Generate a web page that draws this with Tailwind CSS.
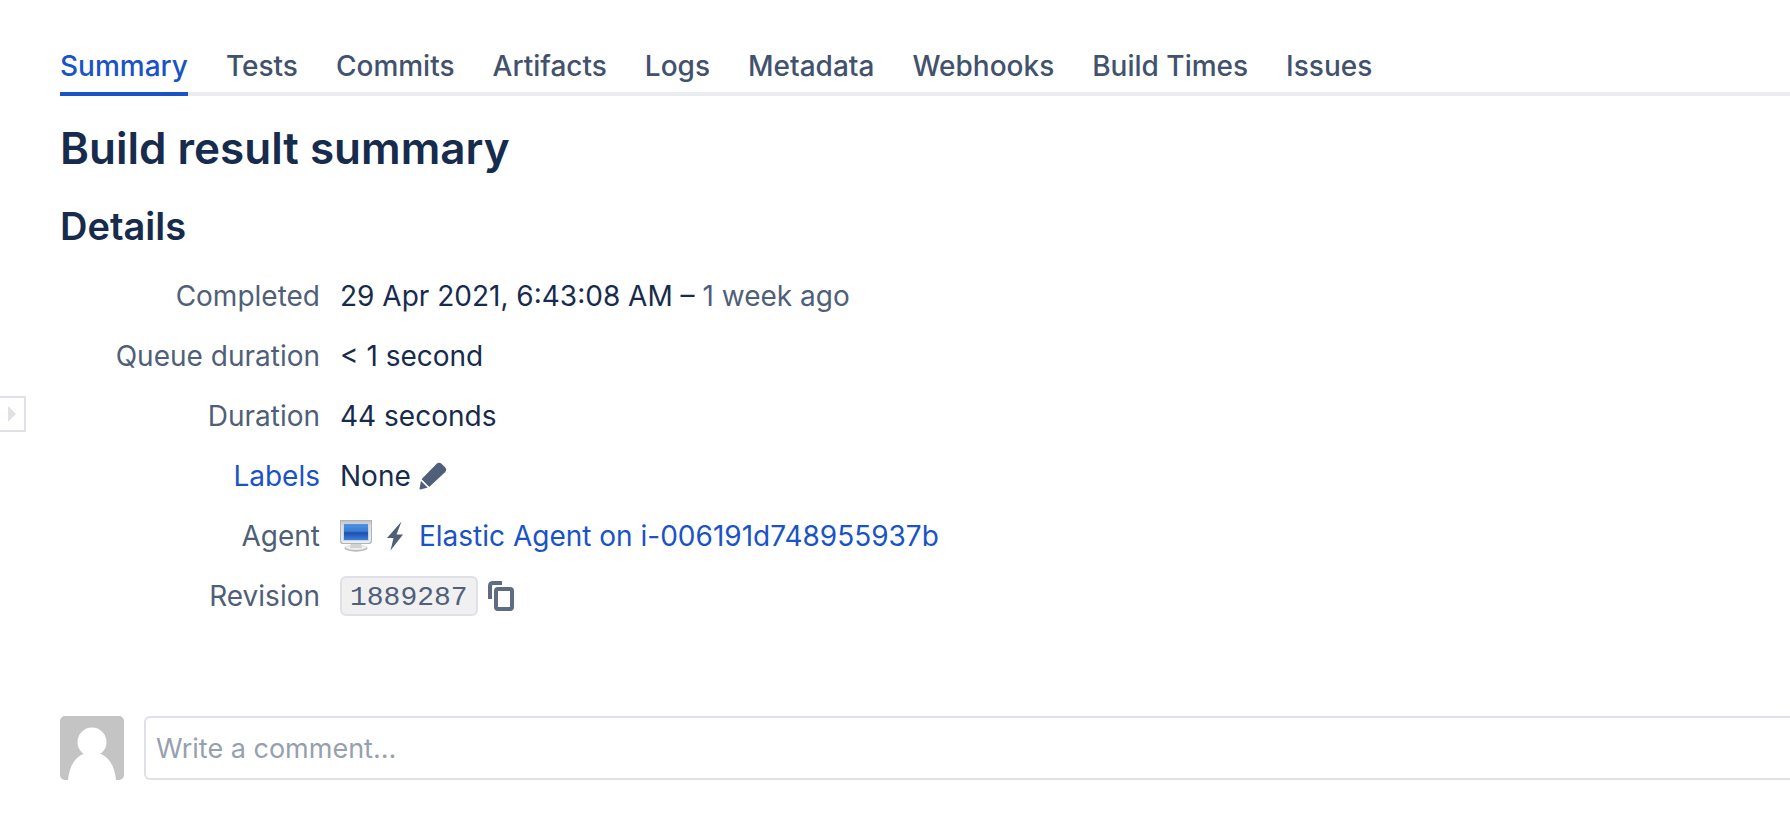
<!DOCTYPE html>
<html lang="en">
<head>
  <meta charset="UTF-8" />
  <meta name="viewport" content="width=device-width, initial-scale=1.0" />
  <title>Build result summary</title>
  <script src="https://cdn.jsdelivr.net/npm/@tailwindcss/browser@4"></script>
</head>
<body class="bg-white text-[#172b4d] font-['Inter',sans-serif] text-[28px] leading-[40px] min-h-screen overflow-x-hidden">

  <!-- Sidebar toggle -->
  <button type="button" aria-label="Expand sidebar" class="absolute left-0 top-[396px] w-[26px] h-9 border-2 border-l-0 border-[#dfe1e6] bg-white">
    <svg class="block w-6 h-8" viewBox="0 0 24 32"><path d="M8 8v16l8-8z" fill="#dfe1e6" /></svg>
  </button>

  <div class="pl-15 pt-[46px]">

    <!-- Tabs -->
    <nav class="flex gap-[38px] font-medium text-[#42526e] shadow-[inset_0_-4px_0_#ebecf0]">
      <a href="#summary" class="pb-[6px] border-b-4 border-[#1a53c6] text-[#1a53c6]">Summary</a>
      <a href="#tests">Tests</a>
      <a href="#commits">Commits</a>
      <a href="#artifacts">Artifacts</a>
      <a href="#logs">Logs</a>
      <a href="#metadata">Metadata</a>
      <a href="#webhooks">Webhooks</a>
      <a href="#build-times">Build Times</a>
      <a href="#issues">Issues</a>
    </nav>

    <main>
      <h1 class="mt-6 text-[44px] leading-[56px] font-semibold">Build result summary</h1>
      <h2 class="mt-[26px] text-[38px] leading-[48px] font-semibold">Details</h2>

      <!-- Details list -->
      <dl class="mt-4 grid grid-cols-[260px_1fr] auto-rows-[60px] gap-x-5 items-center">
        <dt class="text-right text-[#505f79]">Completed</dt>
        <dd>29 Apr 2021, 6:43:08 AM – <span class="text-[#505f79]">1 week ago</span></dd>

        <dt class="text-right text-[#505f79]">Queue duration</dt>
        <dd>&lt; 1 second</dd>

        <dt class="text-right text-[#505f79]">Duration</dt>
        <dd>44 seconds</dd>

        <dt class="text-right"><a href="#labels" class="text-[#1a53c6]">Labels</a></dt>
        <dd class="flex items-center gap-2">
          None
          <button type="button" aria-label="Edit labels">
            <svg class="block w-7 h-7" viewBox="0 0 28 28" fill="#505f79">
              <path d="M17.2 2.2 Q19.8-.4 22.5 1.7L26 5.2Q28.4 7.8 26 10.2L10.2 25 2.5 17.2Z" />
              <path d="M2 18.4 9 25.4 1.4 27.4Q.4 27.5.5 26.5Z" />
              <path d="M1.8 17.8 9.8 25.8" stroke="#fff" stroke-width="1.3" />
            </svg>
          </button>
        </dd>

        <dt class="text-right text-[#505f79]">Agent</dt>
        <dd class="flex items-center">
          <svg class="w-8 h-8" viewBox="0 0 32 32">
            <defs>
              <linearGradient id="frame" x1="0" y1="0" x2="0" y2="1">
                <stop offset="0" stop-color="#c2c2c2" />
                <stop offset=".2" stop-color="#dedede" />
                <stop offset="1" stop-color="#ededed" />
              </linearGradient>
              <linearGradient id="screen" x1="0" y1="0" x2="0" y2="1">
                <stop offset="0" stop-color="#4f92e0" />
                <stop offset=".45" stop-color="#3c7cd2" />
                <stop offset=".55" stop-color="#1c4fb0" />
                <stop offset="1" stop-color="#3f80d8" />
              </linearGradient>
            </defs>
            <ellipse cx="16" cy="28" rx="11.5" ry="3.7" fill="#b9b9b9" />
            <ellipse cx="16" cy="27.2" rx="10.5" ry="2.8" fill="#efefef" />
            <path d="M11 23h10l1 5H10z" fill="#d2d2d2" />
            <path d="M0 0h32v21q0 3-3 3H3q-3 0-3-3z" fill="#b4b4b4" />
            <path d="M1 1h30v19q0 3-3 3H4q-3 0-3-3z" fill="url(#frame)" />
            <path d="M3 3h26v18H3z" fill="#c3d3ea" />
            <path d="M4 4h24v16H4z" fill="url(#screen)" />
          </svg>
          <svg class="ml-[15px] mr-4 w-4 h-[30px]" viewBox="0 0 16 30"><path d="M14.5.5 0 17h6.5L3.5 29.5 16 13.5H9.5z" fill="#505f79" /></svg>
          <a href="#agent" class="text-[#1a53c6]">Elastic Agent on i-006191d748955937b</a>
        </dd>

        <dt class="text-right text-[#505f79]">Revision</dt>
        <dd class="flex items-center gap-[10px]">
          <code class="h-10 leading-[40px] px-2 border-2 border-[#dfe1e6] rounded-md bg-[#f0f0f0] text-[#505f79] text-[28px] font-['Liberation_Mono',monospace]">1889287</code>
          <button type="button" aria-label="Copy revision">
            <svg class="block w-[26px] h-[30px]" viewBox="0 0 26 30" fill="none" stroke="#5e6c84" stroke-width="4">
              <path d="M2 18V5q0-3 3-3h9" />
              <rect x="8" y="8" width="16" height="20" rx="2" />
            </svg>
          </button>
        </dd>
      </dl>

      <!-- Comment form -->
      <form class="mt-[90px] flex gap-5">
        <svg class="w-16 h-16 shrink-0 rounded-[5px]" viewBox="0 0 64 64" role="img" aria-label="Your avatar">
          <rect width="64" height="64" fill="#c4c4c4" />
          <circle cx="32" cy="26" r="14.5" fill="#fff" />
          <path d="M8 64C9 52 14 42 23 38h18c9 4 14 14 15 26z" fill="#fff" />
        </svg>
        <input type="text" aria-label="Write a comment" placeholder="Write a comment…" class="flex-1 min-w-0 h-16 px-[10px] border-2 border-r-0 border-[#dfe1e6] rounded-l-md bg-white text-[27px] placeholder:text-[#97a0af]" />
      </form>
    </main>
  </div>

</body>
</html>
